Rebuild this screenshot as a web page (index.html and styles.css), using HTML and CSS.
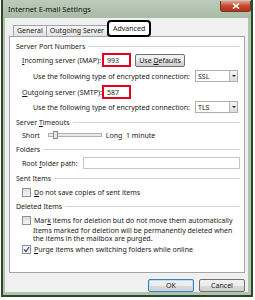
FILE: index.html
```html
<!DOCTYPE html>
<html lang="en">
<head>
    <meta charset="UTF-8">
    <title>Internet E-mail Settings</title>
    <link rel="stylesheet" href="styles.css">
</head>
<body>
    <div class="window">
        <div class="titlebar">
            <span class="title">Internet E-mail Settings</span>
            <span class="close">
                <svg width="8" height="6" viewBox="0 0 8 6"><path d="M1 0.5 L7 5.5 M7 0.5 L1 5.5" stroke="#fff" stroke-width="1.6"/></svg>
            </span>
        </div>
        <div class="client">
            <div class="tabs">
                <div class="tab">General</div>
                <div class="tab">Outgoing Server</div>
                <div class="tab active">Advanced</div>
            </div>
            <div class="panel">
                <div class="group"><span>Server Port Numbers</span></div>
                <div class="row indent port-row first">
                    <span class="label"><u>I</u>ncoming server (IMAP):</span>
                    <span class="field marked">993</span>
                    <span class="btn defaults"><span>Use <u>D</u>efaults</span></span>
                </div>
                <div class="row deep sel-row">
                    <span class="label wide">Use the following type of encrypted connection:</span>
                    <span class="select">SSL<span class="arrow"></span></span>
                </div>
                <div class="row indent port-row">
                    <span class="label"><u>O</u>utgoing server (SMTP):</span>
                    <span class="field marked">587</span>
                </div>
                <div class="row deep sel-row tls">
                    <span class="label wide">Use the following type of encrypted connection:</span>
                    <span class="select">TLS<span class="arrow"></span></span>
                </div>

                <div class="group"><span>Server <u>T</u>imeouts</span></div>
                <div class="row indent slider-row">
                    <span>Short</span>
                    <span class="slider"><span class="thumb"></span></span>
                    <span>Long&nbsp;&nbsp;1 minute</span>
                </div>

                <div class="group"><span>Folders</span></div>
                <div class="row indent path-row">
                    <span class="label short">Root <u>f</u>older path:</span>
                    <span class="field path"></span>
                </div>

                <div class="group"><span>Sent Items</span></div>
                <div class="row indent check-row">
                    <span class="check"></span>
                    <span><u>D</u>o not save copies of sent items</span>
                </div>

                <div class="group"><span>Deleted Items</span></div>
                <div class="row indent check-row">
                    <span class="check"></span>
                    <span>Mar<u>k</u> items for deletion but do not move them automatically</span>
                </div>
                <div class="note">Items marked for deletion will be permanently deleted when<br>the items in the mailbox are purged.</div>
                <div class="row indent check-row purge">
                    <span class="check checked">
                        <svg width="7" height="7" viewBox="0 0 7 7"><path d="M1 3.5 L3 5.5 L6 1" fill="none" stroke="#2b4a8c" stroke-width="1.2"/></svg>
                    </span>
                    <span><u>P</u>urge items when switching folders while online</span>
                </div>
            </div>
            <div class="footer">
                <span class="btn ok">OK</span>
                <span class="btn">Cancel</span>
            </div>
        </div>
    </div>
</body>
</html>
```

FILE: styles.css
```css
body {
    margin: 0;
    background: #ffffff;
    font-family: "Noto Sans", "Liberation Sans", sans-serif;
    font-size: 7px;
    color: #1a1a1a;
}
u {
    text-decoration-thickness: 1px;
}
.window {
    width: 248px;
    height: 295px;
    margin-left: 1px;
    border: 2px solid #2c4a2b;
    border-top-width: 0;
    background: #b2c3b0;
    display: flex;
    flex-direction: column;
}
.titlebar {
    height: 19px;
    display: flex;
    align-items: center;
    justify-content: space-between;
    padding-left: 5px;
    background: linear-gradient(#bccbba, #a9bca7);
}
.title {
    font-size: 7.5px;
    color: #111;
    margin-top: -1px;
}
.close {
    width: 29px;
    height: 10px;
    margin-top: -6px;
    border: 1px solid #6b3a30;
    border-top: 0;
    border-radius: 0 0 3px 3px;
    background: linear-gradient(#e3a28f, #c9452c 50%, #b8301a);
    display: flex;
    align-items: center;
    justify-content: center;
}
.client {
    flex: 1;
    margin: 0 3px 3px 2px;
    background: #f0f0f0;
    padding: 3px 3px 0 4px;
    display: flex;
    flex-direction: column;
}

/* tabs */
.tabs {
    display: flex;
    align-items: flex-end;
    height: 15px;
    padding-left: 4px;
    position: relative;
    z-index: 1;
}
.tab {
    height: 10px;
    line-height: 10px;
    padding: 0 3px;
    border: 1px solid #a0a4ab;
    border-bottom: 0;
    background: linear-gradient(#f6f6f6, #e2e2e2);
    margin-right: -1px;
}
.tab.active {
    height: 13px;
    line-height: 13px;
    padding: 0 4px;
    background: #fff;
    border: 2px solid #000;
    border-radius: 4px;
    margin-bottom: -1px;
}

/* panel */
.panel {
    height: 231px;
    background: #fff;
    border: 1px solid #a0a4ab;
    padding: 4px 4px 0 6px;
}
.group {
    display: flex;
    align-items: center;
    height: 10px;
    margin-top: 4px;
}
.panel > .group:first-child {
    margin-top: 0;
}
.group::after {
    content: "";
    flex: 1;
    border-top: 1px solid #d5d5d5;
    margin-left: 3px;
}
.row {
    display: flex;
    align-items: center;
}
.indent {
    margin-left: 6px;
}
.deep {
    margin-left: 17px;
}
.label {
    width: 80px;
    flex: none;
}
.label.wide {
    width: 162px;
}
.label.short {
    width: 61px;
}
.port-row {
    height: 14px;
    margin-top: 2px;
}
.port-row + .sel-row {
    margin-top: 3px;
}
.sel-row {
    height: 12px;
}
.sel-row + .port-row {
    margin-top: 3px;
}
.sel-row.tls {
    margin-top: 2px;
}
.field {
    height: 14px;
    box-sizing: border-box;
    border: 1px solid #abadb3;
    background: #fff;
    display: flex;
    align-items: center;
    padding-left: 3px;
}
.field.marked {
    width: 29px;
    border: 2px solid #e3001b;
}
.field.path {
    flex: 1;
    height: 12px;
    border-color: #c4c6cc;
}
.btn {
    height: 13px;
    box-sizing: border-box;
    border: 1px solid #707070;
    border-radius: 2px;
    background: linear-gradient(#f2f2f2, #ebebeb 50%, #dddddd 51%, #cfcfcf);
    display: flex;
    align-items: center;
    justify-content: center;
}
.btn.defaults {
    width: 50px;
    margin-left: 4px;
}
.select {
    width: 43px;
    height: 12px;
    box-sizing: border-box;
    border: 1px solid #abadb3;
    background: #fff;
    display: flex;
    align-items: center;
    justify-content: space-between;
    padding-left: 2px;
}
.arrow {
    width: 8px;
    height: 10px;
    box-sizing: border-box;
    border-left: 1px solid #b8b8b8;
    background: linear-gradient(#f4f4f4, #dcdcdc);
    display: flex;
    align-items: center;
    justify-content: center;
}
.arrow::after {
    content: "";
    border-left: 2px solid transparent;
    border-right: 2px solid transparent;
    border-top: 2px solid #222;
}
.slider-row {
    height: 10px;
    margin-top: 3px;
}
.slider {
    width: 52px;
    height: 2px;
    margin: 0 4px 0 8px;
    border: 1px solid #b0b0b0;
    background: #e7eaea;
    display: flex;
    align-items: center;
}
.thumb {
    width: 3px;
    height: 6px;
    margin-left: 4px;
    background: #e6e6e6;
    border: 1px solid #8a8a8a;
}
.path-row {
    height: 12px;
    margin-top: 3px;
}
.check-row {
    height: 10px;
    margin-top: 4px;
}
.check {
    width: 7px;
    height: 7px;
    border: 1px solid #8e8f8f;
    background: linear-gradient(#dcdcdc, #f6f6f6);
    margin-right: 3px;
    display: flex;
    align-items: center;
    justify-content: center;
}
.check.checked {
    background: #f4f4f4;
}
.note {
    margin: 2px 0 0 17px;
    line-height: 8px;
}
.check-row.purge {
    margin-top: 1px;
}

/* bottom buttons */
.footer {
    display: flex;
    justify-content: flex-end;
    gap: 5px;
    margin-top: 6px;
}
.footer .btn {
    width: 46px;
}
.btn.ok {
    border-color: #3c7fb1;
    box-shadow: inset 0 0 0 1px #b8e0f6;
}
```
